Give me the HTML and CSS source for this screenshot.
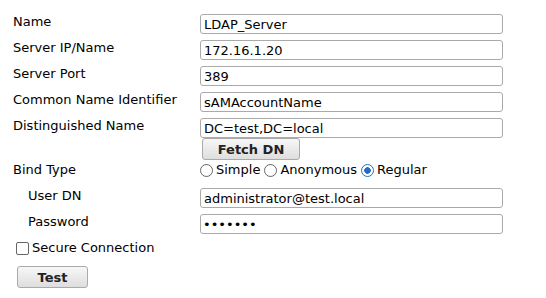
FILE: index.html
```html
<!DOCTYPE html>
<html lang="en">
<head>
    <meta charset="UTF-8">
    <title>LDAP Server</title>
    <link rel="stylesheet" href="styles.css">
</head>
<body>
<form class="ldap-form">
    <div class="row">
        <label>Name</label>
        <input type="text" value="LDAP_Server">
    </div>
    <div class="row">
        <label>Server IP/Name</label>
        <input type="text" value="172.16.1.20">
    </div>
    <div class="row">
        <label>Server Port</label>
        <input type="text" value="389">
    </div>
    <div class="row">
        <label>Common Name Identifier</label>
        <input type="text" value="sAMAccountName">
    </div>
    <div class="row row-dn">
        <label>Distinguished Name</label>
        <div class="field-stack">
            <input type="text" value="DC=test,DC=local">
            <button type="button" class="btn btn-fetch">Fetch DN</button>
        </div>
    </div>
    <div class="row row-bind">
        <label>Bind Type</label>
        <div class="radios">
            <label class="opt"><input type="radio" name="bind"> Simple</label>
            <label class="opt"><input type="radio" name="bind"> Anonymous</label>
            <label class="opt"><input type="radio" name="bind" checked> Regular</label>
        </div>
    </div>
    <div class="row sub">
        <label>User DN</label>
        <input type="text" value="administrator@test.local">
    </div>
    <div class="row sub">
        <label>Password</label>
        <input type="password" value="1234567">
    </div>
    <label class="secure"><input type="checkbox"> Secure Connection</label>
    <button type="button" class="btn btn-test">Test</button>
</form>
</body>
</html>
```

FILE: styles.css
```css
body {
    margin: 0;
    padding: 0;
    background: #fff;
    color: #000;
    font-family: "DejaVu Sans", Verdana, sans-serif;
    font-size: 13px;
}
.ldap-form {
    padding: 14px 0 0 13px;
    width: 490px;
}
.row {
    display: grid;
    grid-template-columns: 187px 303px;
    align-items: start;
    margin-bottom: 6px;
}
.row > label {
    line-height: 16px;
}
.row input[type="text"],
.row input[type="password"] {
    box-sizing: border-box;
    width: 303px;
    height: 20px;
    margin: 0;
    padding: 0 3px;
    border: 1px solid #aaa;
    border-radius: 3px;
    font-family: inherit;
    font-size: 13px;
    color: #000;
}
.row input[type="password"] {
    font-size: 13px;
    padding-left: 2px;
}
.field-stack {
    display: flex;
    flex-direction: column;
    align-items: flex-start;
}
.btn {
    box-sizing: border-box;
    height: 22px;
    border: 1px solid #aaa;
    border-radius: 3px;
    background: linear-gradient(#f7f7f7, #dedede);
    font-family: inherit;
    font-size: 13px;
    font-weight: bold;
    color: #222;
    padding: 0;
}
.btn-fetch {
    width: 98px;
    margin: 0 0 0 2px;
}
.row-dn {
    margin-bottom: 2px;
}
.row-bind {
    margin-bottom: 10px;
}
.radios {
    display: flex;
    gap: 4px;
    line-height: 16px;
}
.opt {
    display: flex;
    align-items: center;
    gap: 3px;
}
input[type="radio"] {
    appearance: none;
    box-sizing: border-box;
    width: 13px;
    height: 13px;
    margin: 0;
    border: 1px solid #666;
    border-radius: 50%;
    background: #fff;
}
input[type="radio"]:checked {
    border-color: #2a6fc0;
    background: radial-gradient(circle, #1a6fd0 0 3px, #fff 3.5px);
}
.sub > label {
    padding-left: 15px;
}
.secure {
    display: flex;
    align-items: center;
    gap: 3px;
    margin: 0 0 0 3px;
    line-height: 16px;
}
input[type="checkbox"] {
    appearance: none;
    box-sizing: border-box;
    width: 13px;
    height: 13px;
    margin: 0;
    border: 1px solid #666;
    border-radius: 2px;
    background: #fff;
}
.btn-test {
    width: 71px;
    margin: 10px 0 0 4px;
}
```
